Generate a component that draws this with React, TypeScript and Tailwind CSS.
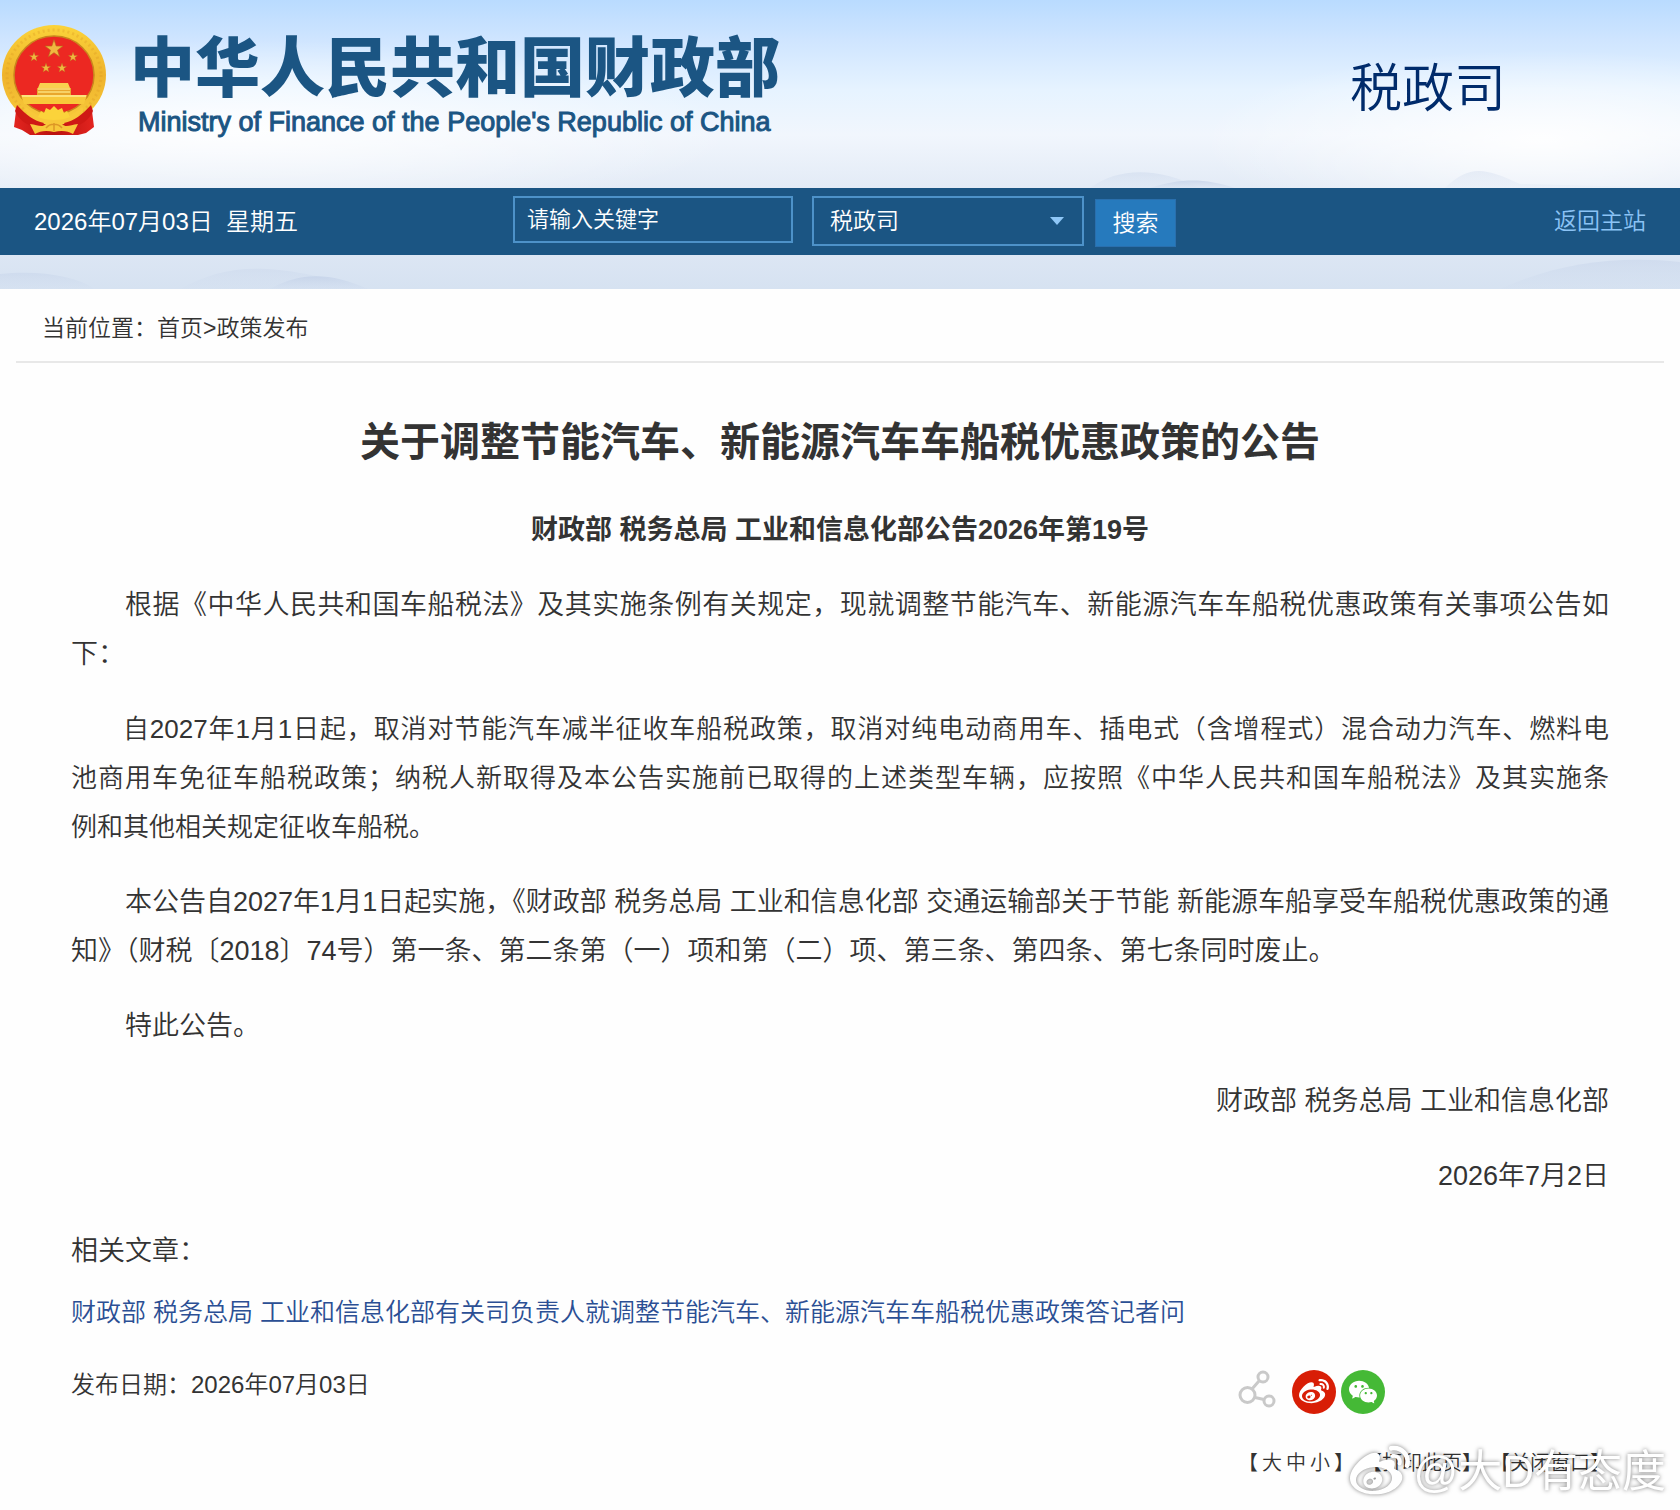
import { FaWeibo } from "react-icons/fa";
import { AiFillWechat } from "react-icons/ai";

const STAR = "M0 -10 L2.3 -3.1 L9.5 -3.1 L3.7 1.2 L5.9 8.1 L0 3.9 L-5.9 8.1 L-3.7 1.2 L-9.5 -3.1 L-2.3 -3.1 Z";

const Emblem = () => (
  <svg viewBox="0 0 104 112" className="mt-[25px] h-28 w-[104px] shrink-0" aria-hidden="true">
    <defs>
      <linearGradient id="gold" x1="0" y1="0" x2="0" y2="1">
        <stop offset="0" stopColor="#fbd33a" />
        <stop offset="0.5" stopColor="#efb32c" />
        <stop offset="1" stopColor="#f8cb3c" />
      </linearGradient>
      <linearGradient id="ribbon" x1="0" y1="0" x2="1" y2="0">
        <stop offset="0" stopColor="#e3241f" />
        <stop offset="0.5" stopColor="#b9120f" />
        <stop offset="1" stopColor="#e3241f" />
      </linearGradient>
    </defs>
    <path d="M15 78 L12 102 L20 105 L28 110 L76 110 L84 108 L92 102 L89 78 Z" fill="url(#ribbon)" />
    <ellipse cx="52" cy="50" rx="52" ry="50" fill="url(#gold)" />
    <ellipse cx="52" cy="50" rx="47" ry="45" fill="none" stroke="#dc9a25" strokeWidth="3" strokeDasharray="2 3" opacity="0.35" />
    <ellipse cx="52" cy="50" rx="40" ry="39" fill="#ec2822" stroke="#c9861d" strokeWidth="1.5" />
    <path d={STAR} transform="translate(52 24) scale(0.95)" fill="#f0b840" stroke="#b9651a" strokeWidth="0.7" />
    <path d={STAR} transform="translate(32 32) scale(0.5)" fill="#f0b840" stroke="#b9651a" strokeWidth="0.7" />
    <path d={STAR} transform="translate(71 32) scale(0.5)" fill="#f0b840" stroke="#b9651a" strokeWidth="0.7" />
    <path d={STAR} transform="translate(44 43) scale(0.5)" fill="#f0b840" stroke="#b9651a" strokeWidth="0.7" />
    <path d={STAR} transform="translate(60 43) scale(0.5)" fill="#f0b840" stroke="#b9651a" strokeWidth="0.7" />
    {/* gate tower */}
    <path d="M38 58 L66 58 L68 63 L36 63 Z" fill="#f9d04f" />
    <path d="M35 63 H69 V70 H35 Z" fill="#e9a72d" />
    <path d="M36 67 H68 M36 64 H68" stroke="#fbe07a" strokeWidth="1.5" />
    <path d="M19 70 H85 L82 79 H22 Z" fill="#f8c83a" />
    <path d="M20 71 H84" stroke="#fde27c" strokeWidth="2" />
    {/* ribbon knot and cog wheel */}
    <path d="M15 80 C24 90 32 96 42 98 L38 104 C25 101 16 94 13 86 Z" fill="#cf1915" />
    <path d="M89 80 C80 90 72 96 62 98 L66 104 C79 101 88 94 91 86 Z" fill="#cf1915" />
    <path d="M24 82 C34 91 42 93 52 93 C62 93 70 91 80 82 L82 85 C72 96 62 98 52 98 C42 98 32 96 22 85 Z" fill="#f8c83a" />
    <path d="M36 92 L39 86 L42 88 L44 83 L48 85 L52 81 L56 85 L60 83 L62 88 L65 86 L68 92 C60 96 44 96 36 92 Z" fill="#fbd33a" />
    <path d="M28 99 C36 100 40 103 44 99 C48 95 56 95 60 99 C64 103 68 100 76 99 L71 109 C66 106 60 105 52 107 C44 105 38 106 33 109 Z" fill="#f8c83a" />
    <path d="M44 103 C48 98 56 98 60 103 M52 98 V106" stroke="#dd9726" strokeWidth="1.5" fill="none" />
  </svg>
);

const Hills = () => (
  <svg
    viewBox="0 0 1680 289"
    preserveAspectRatio="none"
    className="pointer-events-none absolute inset-0 h-full w-full"
    aria-hidden="true"
  >
    <defs>
      <radialGradient id="glow">
        <stop offset="0" stopColor="#ffffff" stopOpacity="0.9" />
        <stop offset="1" stopColor="#ffffff" stopOpacity="0" />
      </radialGradient>
      <linearGradient id="hill" x1="0" y1="0" x2="0" y2="1">
        <stop offset="0" stopColor="#c3d1e8" stopOpacity="0.75" />
        <stop offset="1" stopColor="#d3dff0" stopOpacity="0.4" />
      </linearGradient>
    </defs>
    <ellipse cx="1540" cy="140" rx="340" ry="90" fill="url(#glow)" />
    <ellipse cx="240" cy="130" rx="500" ry="90" fill="url(#glow)" />
    <path d="M1090 188 C1120 166 1160 168 1200 188 Z" fill="url(#hill)" opacity="0.5" />
    <path d="M1150 188 C1180 178 1205 178 1235 188 Z" fill="url(#hill)" />
    <path d="M1445 188 C1470 164 1485 168 1520 184 L1680 188 Z" fill="url(#hill)" opacity="0.4" />
    <path d="M0 274 C40 270 75 276 95 289 L0 289 Z" fill="url(#hill)" opacity="0.6" />
    <path d="M180 289 C230 262 270 262 370 289 Z" fill="url(#hill)" opacity="0.4" />
    <path d="M270 289 C300 272 330 272 368 289 Z" fill="url(#hill)" />
    <path d="M1500 289 C1560 262 1620 256 1680 262 L1680 289 Z" fill="url(#hill)" opacity="0.6" />
  </svg>
);

const ShareIcon = () => (
  <svg viewBox="0 0 38 38" className="h-[38px] w-[38px]" fill="none" stroke="#c9c9c9" strokeWidth="3" aria-hidden="true">
    <circle cx="9.5" cy="25" r="7.5" />
    <circle cx="25" cy="7" r="5" />
    <circle cx="31" cy="31" r="5" />
    <path d="M14 19 L21 11 M17 27.5 L26 29.5" />
  </svg>
);

export default function App() {
  return (
    <div className="relative min-h-screen overflow-hidden bg-[#fefefe] font-['Liberation_Sans','Noto_Sans_CJK_SC',sans-serif] font-[350] text-[#333]">
      <header className="relative bg-[linear-gradient(180deg,#b9dbff_0px,#cfe5ff_40px,#e6f3ff_90px,#f1f6fd_135px,#e3ebf6_187px,#dce6f4_255px,#d6e2f1_289px)] pb-[34px]">
        <Hills />
        <div className="relative flex h-[188px] items-start px-0.5">
          <div className="flex gap-6">
            <Emblem />
            <div className="pt-[30px] text-[#1b5583]">
              <h1 className="text-[65px] leading-[78px] font-black">中华人民共和国财政部</h1>
              <p className="pl-2 text-[27px] leading-7 font-normal [-webkit-text-stroke:1px_#1b5583]">
                Ministry of Finance of the People&#39;s Republic of China
              </p>
            </div>
          </div>
          <p className="mr-[172px] ml-auto pt-[51px] text-[52px] leading-[76px] text-[#002b6b]">税政司</p>
        </div>
        <div className="relative flex h-[67px] items-center justify-between bg-[#1b5583] px-[34px] text-[23px] text-white">
          <span className="w-[479px] text-2xl whitespace-pre">2026年07月03日  星期五</span>
          <form className="flex h-full items-start pt-2" onSubmit={(e) => e.preventDefault()}>
            <input
              type="text"
              aria-label="关键字"
              placeholder="请输入关键字"
              className="h-[47px] w-[280px] border-2 border-[#4d92c9] bg-transparent px-3 text-[22px] text-white placeholder:text-white"
            />
            <div className="relative ml-[19px]">
              <select
                aria-label="搜索范围"
                className="h-[50px] w-[272px] appearance-none border-2 border-[#4d92c9] bg-transparent px-4 text-[23px] text-white"
              >
                <option>税政司</option>
              </select>
              <svg viewBox="0 0 14 8" className="pointer-events-none absolute top-[21px] right-5 h-2 w-3.5" aria-hidden="true">
                <path d="M0 0 H14 L7 8 Z" fill="#8fc7f7" />
              </svg>
            </div>
            <button type="submit" className="mt-[3px] ml-[11px] h-12 w-[81px] border border-[#2a6fad] bg-[#267abd] text-[23px]">
              搜索
            </button>
          </form>
          <a href="#" className="ml-auto text-[#8cc3f5]">
            返回主站
          </a>
        </div>
      </header>

      <nav className="mx-4 border-b-2 border-[#e8e8e8] px-[26px] pt-[21px] pb-[15px] text-[23px] leading-9" aria-label="当前位置">
        当前位置：<a href="#">首页</a>&gt;<a href="#">政策发布</a>
      </nav>

      <main className="px-[71px] pt-[49px]">
        <article className="text-[27px] leading-[49px] [&>p]:mb-[26px]">
          <h2 className="text-center text-[40px] leading-[60px] font-bold">关于调整节能汽车、新能源汽车车船税优惠政策的公告</h2>
          <p className="mt-[34px] text-center font-bold">财政部 税务总局 工业和信息化部公告2026年第19号</p>
          <p className="text-justify indent-[2em]">
            根据《中华人民共和国车船税法》及其实施条例有关规定，现就调整节能汽车、新能源汽车车船税优惠政策有关事项公告如下：
          </p>
          <p className="text-justify indent-[2em] text-[26px]">
            自2027年1月1日起，取消对节能汽车减半征收车船税政策，取消对纯电动商用车、插电式（含增程式）混合动力汽车、燃料电
            <span className="whitespace-nowrap">池商用车</span>
            免征车船税政策；纳税人新取得及本公告实施前已取得的上述类型车辆，应按照《中华人民共和国车船税法》及其实施条
            <span className="whitespace-nowrap">例和其他</span>
            相关规定征收车船税。
          </p>
          <p className="text-justify indent-[2em]">
            本公告自2027年1月1日起实施，《财政部 税务总局 工业和信息化部 交通运输部关于节能 新能源车船享受车船税优惠政策的通知》（财税〔2018〕74号）第一条、第二条第（一）项和第（二）项、第三条、第四条、第七条同时废止。
          </p>
          <p className="indent-[2em]">特此公告。</p>
          <p className="text-right">财政部 税务总局 工业和信息化部</p>
          <p className="text-right">2026年7月2日</p>
          <h3>相关文章：</h3>
          <a href="#" className="mt-3 block text-[25px] text-[#2b4f94]">
            财政部 税务总局 工业和信息化部有关司负责人就调整节能汽车、新能源汽车车船税优惠政策答记者问
          </a>
        </article>

        <footer className="mt-[33px] flex justify-between pb-8 text-2xl leading-[30px]">
          <p>发布日期：2026年07月03日</p>
          <div className="w-[371px]">
            <div className="flex items-start">
              <ShareIcon />
              <a href="#" aria-label="微博" className="ml-4 flex h-11 w-11 items-center justify-center rounded-full bg-[#d81e06] text-white">
                <FaWeibo className="h-[30px] w-[30px]" />
              </a>
              <a href="#" aria-label="微信" className="ml-[5px] flex h-11 w-11 items-center justify-center rounded-full bg-[#45b936] text-white">
                <AiFillWechat className="h-8 w-8" />
              </a>
            </div>
            <div className="mt-[34px] flex gap-2 text-[20px] whitespace-nowrap">
              <span className="flex gap-1">
                【<button type="button">大</button>
                <button type="button">中</button>
                <button type="button">小</button>】
              </span>
              <button type="button">【打印此页】</button>
              <button type="button">【关闭窗口】</button>
            </div>
          </div>
        </footer>
      </main>

      <div className="pointer-events-none absolute right-3.5 bottom-2 flex items-center gap-1 text-[44px] leading-[60px] font-normal text-white [filter:drop-shadow(0_0_2px_rgba(0,0,0,0.5))]">
        <FaWeibo className="h-[60px] w-[60px]" />
        <span>@大D有态度</span>
      </div>
    </div>
  );
}
